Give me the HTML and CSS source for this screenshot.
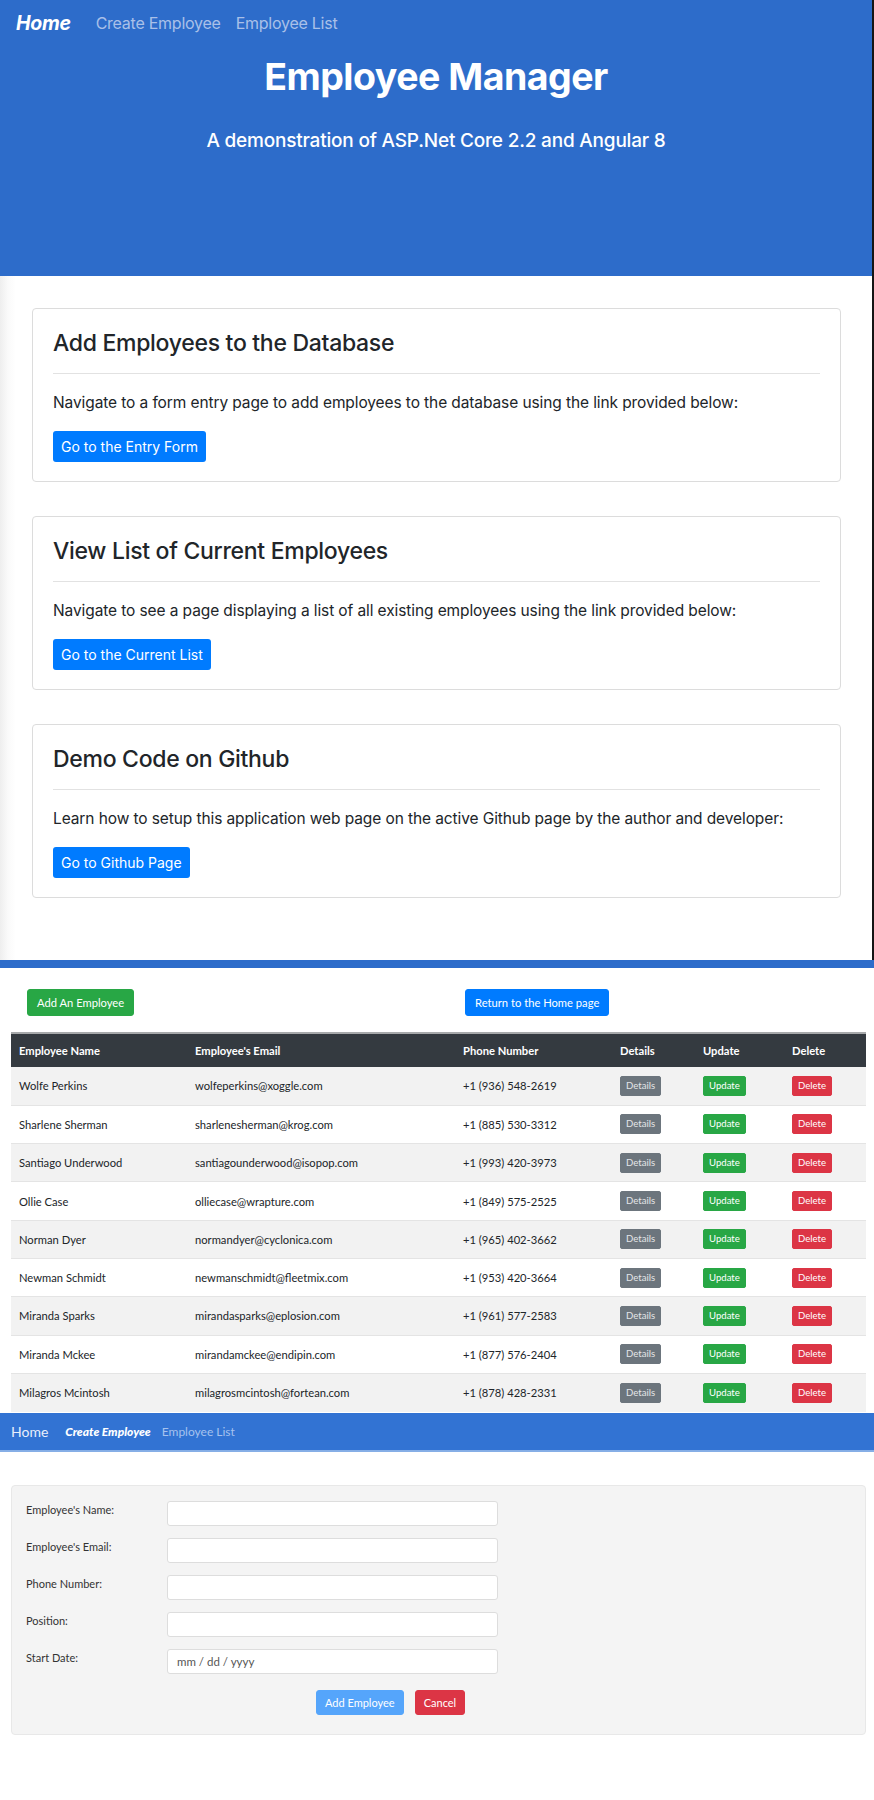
FILE: index.html
```html
<!DOCTYPE html>
<html lang="en">
<head>
<meta charset="utf-8">
<title>Employee Manager</title>
<link rel="stylesheet" href="styles.css">
</head>
<body>
<div class="page">
  <section class="home">
    <header class="hero">
      <nav class="hero-nav">
        <a class="hero-link active">Home</a>
        <a class="hero-link">Create Employee</a>
        <a class="hero-link">Employee List</a>
      </nav>
      <h1 class="hero-title">Employee Manager</h1>
      <p class="hero-lead">A demonstration of ASP.Net Core 2.2 and Angular 8</p>
    </header>
    <main class="cards">
      <div class="card">
        <h3 class="card-title">Add Employees to the Database</h3>
        <hr class="card-rule">
        <p class="card-text">Navigate to a form entry page to add employees to the database using the link provided below:</p>
        <a class="btn-home">Go to the Entry Form</a>
      </div>
      <div class="card">
        <h3 class="card-title">View List of Current Employees</h3>
        <hr class="card-rule">
        <p class="card-text">Navigate to see a page displaying a list of all existing employees using the link provided below:</p>
        <a class="btn-home">Go to the Current List</a>
      </div>
      <div class="card">
        <h3 class="card-title">Demo Code on Github</h3>
        <hr class="card-rule">
        <p class="card-text">Learn how to setup this application web page on the active Github page by the author and developer:</p>
        <a class="btn-home">Go to Github Page</a>
      </div>
    </main>
  </section>

  <div class="divider"></div>

  <section class="list">
    <div class="list-actions">
      <div class="list-col"><a class="btn-s btn-green">Add An Employee</a></div>
      <div class="list-col"><a class="btn-s btn-blue">Return to the Home page</a></div>
    </div>
    <table class="emp-table">
      <thead>
        <tr>
          <th class="c-name">Employee Name</th>
          <th class="c-email">Employee's Email</th>
          <th class="c-phone">Phone Number</th>
          <th class="c-det">Details</th>
          <th class="c-upd">Update</th>
          <th class="c-del">Delete</th>
        </tr>
      </thead>
      <tbody>
        <tr><td>Wolfe Perkins</td><td>wolfeperkins@xoggle.com</td><td>+1 (936) 548-2619</td><td><a class="btn-xs btn-gray">Details</a></td><td><a class="btn-xs btn-green">Update</a></td><td><a class="btn-xs btn-red">Delete</a></td></tr>
        <tr><td>Sharlene Sherman</td><td>sharlenesherman@krog.com</td><td>+1 (885) 530-3312</td><td><a class="btn-xs btn-gray">Details</a></td><td><a class="btn-xs btn-green">Update</a></td><td><a class="btn-xs btn-red">Delete</a></td></tr>
        <tr><td>Santiago Underwood</td><td>santiagounderwood@isopop.com</td><td>+1 (993) 420-3973</td><td><a class="btn-xs btn-gray">Details</a></td><td><a class="btn-xs btn-green">Update</a></td><td><a class="btn-xs btn-red">Delete</a></td></tr>
        <tr><td>Ollie Case</td><td>olliecase@wrapture.com</td><td>+1 (849) 575-2525</td><td><a class="btn-xs btn-gray">Details</a></td><td><a class="btn-xs btn-green">Update</a></td><td><a class="btn-xs btn-red">Delete</a></td></tr>
        <tr><td>Norman Dyer</td><td>normandyer@cyclonica.com</td><td>+1 (965) 402-3662</td><td><a class="btn-xs btn-gray">Details</a></td><td><a class="btn-xs btn-green">Update</a></td><td><a class="btn-xs btn-red">Delete</a></td></tr>
        <tr><td>Newman Schmidt</td><td>newmanschmidt@fleetmix.com</td><td>+1 (953) 420-3664</td><td><a class="btn-xs btn-gray">Details</a></td><td><a class="btn-xs btn-green">Update</a></td><td><a class="btn-xs btn-red">Delete</a></td></tr>
        <tr><td>Miranda Sparks</td><td>mirandasparks@eplosion.com</td><td>+1 (961) 577-2583</td><td><a class="btn-xs btn-gray">Details</a></td><td><a class="btn-xs btn-green">Update</a></td><td><a class="btn-xs btn-red">Delete</a></td></tr>
        <tr><td>Miranda Mckee</td><td>mirandamckee@endipin.com</td><td>+1 (877) 576-2404</td><td><a class="btn-xs btn-gray">Details</a></td><td><a class="btn-xs btn-green">Update</a></td><td><a class="btn-xs btn-red">Delete</a></td></tr>
        <tr><td>Milagros Mcintosh</td><td>milagrosmcintosh@fortean.com</td><td>+1 (878) 428-2331</td><td><a class="btn-xs btn-gray">Details</a></td><td><a class="btn-xs btn-green">Update</a></td><td><a class="btn-xs btn-red">Delete</a></td></tr>
      </tbody>
    </table>
  </section>

  <section class="create">
    <nav class="nav2">
      <a class="nav2-link nav2-home">Home</a>
      <a class="nav2-link nav2-active">Create Employee</a>
      <a class="nav2-link nav2-muted">Employee List</a>
    </nav>
    <form class="panel">
      <div class="form-row">
        <label class="form-label">Employee's Name:</label>
        <input class="form-input" type="text">
      </div>
      <div class="form-row">
        <label class="form-label">Employee's Email:</label>
        <input class="form-input" type="text">
      </div>
      <div class="form-row">
        <label class="form-label">Phone Number:</label>
        <input class="form-input" type="text">
      </div>
      <div class="form-row">
        <label class="form-label">Position:</label>
        <input class="form-input" type="text">
      </div>
      <div class="form-row">
        <label class="form-label">Start Date:</label>
        <input class="form-input form-date" type="text" placeholder="mm / dd / yyyy">
      </div>
      <div class="form-actions">
        <a class="btn-f btn-light-blue">Add Employee</a>
        <a class="btn-f btn-red">Cancel</a>
      </div>
    </form>
  </section>
</div>
</body>
</html>
```

FILE: styles.css
```css
* { box-sizing: border-box; }

html, body {
  margin: 0;
  padding: 0;
  background: #ffffff;
}

.page {
  width: 874px;
}

/* ---------- Home section ---------- */
.home {
  font-family: Inter, "Noto Sans", sans-serif;
  color: #212529;
  border-right: 2px solid #151515;
}

.hero {
  height: 276px;
  background: #2d6cca;
  color: #ffffff;
  text-align: center;
}

.hero-nav {
  display: flex;
  align-items: center;
  padding: 12px 16px 0;
  height: 34px;
  text-align: left;
}

.hero-link {
  font-size: 16px;
  line-height: 22px;
  color: #a9c0e8;
  margin-right: 15px;
  letter-spacing: -0.25px;
}

.hero-link.active {
  color: #ffffff;
  font-size: 19.5px;
  font-weight: 700;
  font-style: italic;
  margin-right: 25px;
  letter-spacing: -0.3px;
}

.hero-title {
  margin: 19px 0 0;
  font-size: 37.5px;
  line-height: 48px;
  font-weight: 700;
  letter-spacing: -0.5px;
}

.hero-lead {
  margin: 26px 0 0;
  font-size: 19px;
  line-height: 28px;
  font-weight: 500;
  letter-spacing: -0.2px;
}

.cards {
  display: flex;
  flex-direction: column;
  gap: 34px;
  padding: 32px 31px 62px 32px;
  background: linear-gradient(to right, #eeeeee 0px, #fafafa 8px, #ffffff 16px);
}

.card {
  background: #ffffff;
  border: 1px solid #dcdcdc;
  border-radius: 4px;
  padding: 20px 20px 19px;
}

.card-title {
  margin: 0;
  font-size: 23px;
  line-height: 29px;
  font-weight: 500;
  letter-spacing: -0.3px;
}

.card-rule {
  margin: 15px 0 0;
  border: 0;
  border-top: 1px solid #e2e2e2;
}

.card-text {
  margin: 17px 0 16px;
  font-size: 15.5px;
  line-height: 24px;
  letter-spacing: -0.1px;
  white-space: nowrap;
}

.btn-home {
  display: inline-block;
  background: #007bff;
  color: #ffffff;
  font-size: 14px;
  line-height: 21px;
  padding: 5px 8px;
  border-radius: 3px;
}

.divider {
  height: 8px;
  background: #2d6cca;
}

/* ---------- List section ---------- */
.list {
  font-family: Lato, "Open Sans", sans-serif;
  color: #212529;
}

.list-actions {
  display: grid;
  grid-template-columns: 438px 436px;
  padding: 21px 0 16px;
}

.list-col {
  padding-left: 27px;
}

.btn-s {
  display: inline-block;
  font-size: 11.2px;
  line-height: 17px;
  padding: 4px 9px;
  border-radius: 3px;
  color: #ffffff;
}

.btn-green { background: #28a745; border: 1px solid #28a745; color: #ffffff; }
.btn-blue  { background: #007bff; border: 1px solid #007bff; color: #ffffff; }
.btn-gray  { background: #6c757d; border: 1px solid #6c757d; color: #e4e6e8; }
.btn-red   { background: #dc3545; border: 1px solid #dc3545; color: #ffffff; }

.emp-table {
  margin: 0 8px 0 11px;
  width: 855px;
  border-collapse: collapse;
  table-layout: fixed;
  font-size: 11.2px;
}

.emp-table th {
  background: #343a40;
  color: #ffffff;
  font-weight: 700;
  text-align: left;
  height: 34px;
  padding: 0 8px;
  border-top: 2px solid #a7a9ab;
}

.c-name  { width: 176px; }
.c-email { width: 268px; }
.c-phone { width: 157px; }
.c-det   { width: 83px; }
.c-upd   { width: 89px; }
.c-del   { width: 82px; }

.emp-table td {
  height: 38.3px;
  padding: 0 8px;
  border-top: 1px solid #e4e4e4;
  vertical-align: middle;
  white-space: nowrap;
}

.emp-table tbody tr:nth-child(odd) td { background: #f2f2f2; }
.emp-table tbody tr:first-child td { border-top: 0; }

.btn-xs {
  display: inline-block;
  font-size: 9.6px;
  line-height: 18px;
  height: 20px;
  padding: 0 5px;
  border-radius: 2px;
}

/* ---------- Create section ---------- */
.create {
  font-family: Lato, "Open Sans", sans-serif;
  color: #212529;
  padding-bottom: 63px;
}

.nav2 {
  display: flex;
  align-items: center;
  height: 39px;
  background: #3273d3;
  border-bottom: 2px solid #86aee6;
  padding-left: 11px;
  margin-top: 1px;
}

.nav2-link {
  font-size: 12px;
}

.nav2-home {
  color: #e8effb;
  font-size: 14px;
  margin-right: 17px;
}

.nav2-active {
  color: #ffffff;
  font-weight: 900;
  font-style: italic;
  margin-right: 11px;
}

.nav2-muted {
  color: #a6c2ee;
}

.panel {
  margin: 33px 8px 0 11px;
  background: #f4f4f4;
  border: 1px solid #e8e8e8;
  border-radius: 4px;
  padding: 15px 14px 19px;
  display: flex;
  flex-direction: column;
  gap: 12px;
}

.form-row {
  display: grid;
  grid-template-columns: 141px 331px;
  align-items: start;
}

.form-label {
  font-size: 11px;
  line-height: 17px;
  color: #333333;
}

.form-input {
  height: 25px;
  border: 1px solid #dddddd;
  border-radius: 3px;
  background: #ffffff;
  font-family: Lato, "Open Sans", sans-serif;
  font-size: 11.5px;
  padding: 0 9px;
  outline: none;
}

.form-date::placeholder {
  color: #555555;
}

.form-actions {
  display: flex;
  gap: 11px;
  padding-left: 290px;
  padding-top: 4px;
}

.btn-f {
  display: inline-block;
  font-size: 11px;
  line-height: 17px;
  padding: 3px 8px;
  border-radius: 3px;
}

.btn-light-blue {
  background: #55a5fb;
  border: 1px solid #55a5fb;
  color: #ffffff;
}
```
